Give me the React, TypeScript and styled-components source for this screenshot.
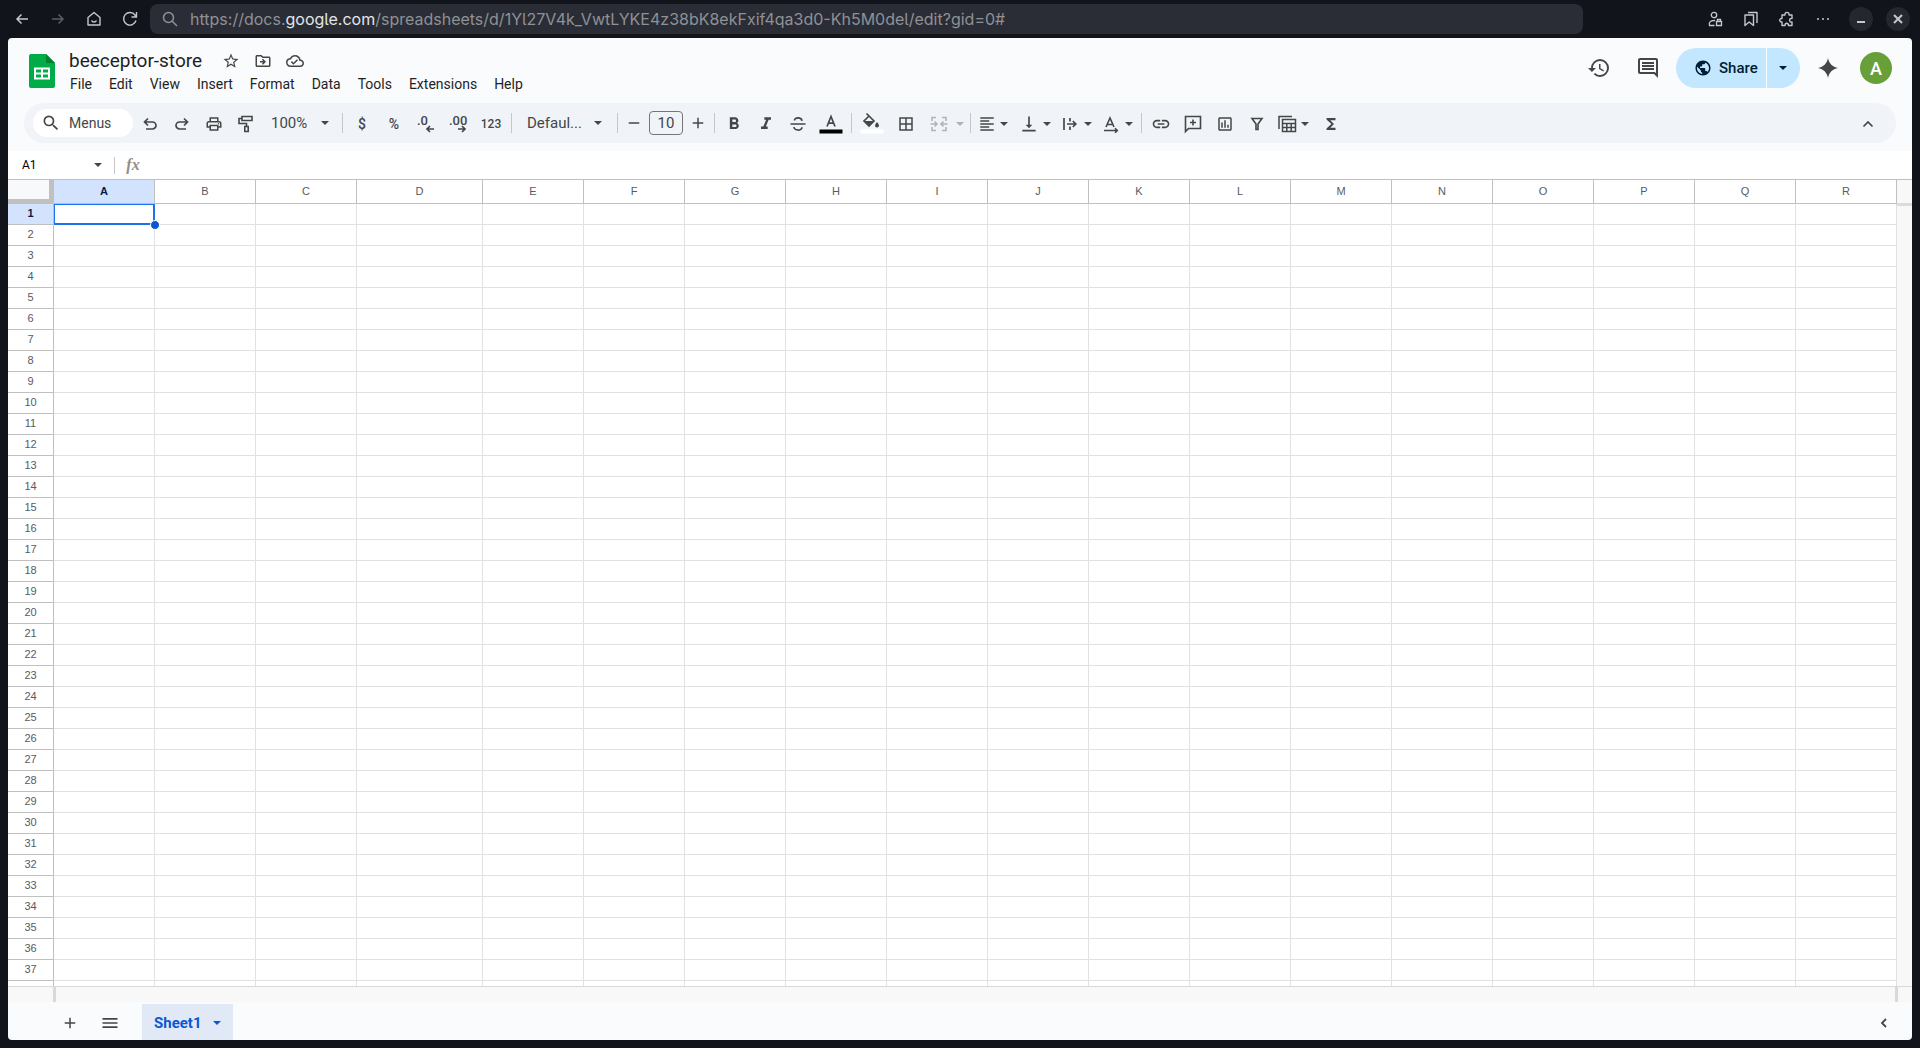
import React from "react";
import styled, { createGlobalStyle, css } from "styled-components";
import {
  MdAdd, MdBorderAll, MdFormatAlignLeft, MdFormatBold, MdFormatItalic, MdFunctions,
  MdHistory, MdLink, MdMenu, MdOutlineCloudDone, MdOutlineDriveFileMove, MdOutlineInsertChart,
  MdOutlineInsertComment, MdOutlinePrint, MdPublic, MdRemove, MdSearch, MdStarBorder,
  MdVerticalAlignBottom,
} from "react-icons/md";

const ui = `Roboto, "Open Sans", "Liberation Sans", sans-serif`;
const ink = "#444746";

const GlobalStyle = createGlobalStyle`
  *, *::before, *::after { box-sizing: border-box; }
  body { margin: 0; background: #11141b; font-family: ${ui}; }
  button, input, select { font-family: inherit; color: inherit; margin: 0; padding: 0; border: 0; background: none; }
  button { cursor: pointer; }
  svg { display: block; flex: none; }
`;

const Shell = styled.div`
  display: flex;
  flex-direction: column;
  height: 100vh;
  overflow: hidden;
`;

/* browser chrome */
const Chrome = styled.header`
  display: flex;
  align-items: center;
  height: 38px;
  padding: 0 10px 0 4px;
  color: #c6c7ca;
  flex: none;
`;
const ChromeButton = styled.button<{ $dim?: boolean }>`
  display: grid;
  place-items: center;
  width: 36px;
  height: 30px;
  color: ${(p) => (p.$dim ? "#5a5d63" : "inherit")};
`;
const Address = styled.div`
  display: flex;
  align-items: center;
  gap: 12px;
  flex: 1;
  min-width: 0;
  height: 30px;
  margin: 0 114px 0 2px;
  padding: 0 12px;
  border-radius: 8px;
  background: #2a2d35;
  color: #8f9196;
`;
const Url = styled.div`
  font: 400 16px/24px Inter, "Noto Sans", sans-serif;
  font-feature-settings: "cv05";
  white-space: nowrap;
  overflow: hidden;
  strong { font-weight: 400; color: #e4e5e7; }
`;
const WindowControls = styled.div`
  display: flex;
  gap: 13px;
  margin-left: 8px;
`;
const WindowButton = styled.button`
  display: grid;
  place-items: center;
  width: 24px;
  height: 24px;
  border-radius: 50%;
  background: #24272e;
`;

/* document */
const Page = styled.main`
  display: flex;
  flex-direction: column;
  flex: 1;
  min-height: 0;
  margin: 0 8px 8px;
  border-radius: 4px;
  overflow: hidden;
  background: #f9fbfd;
  color: ${ink};
`;
const DocHeader = styled.div`
  display: flex;
  align-items: flex-start;
  height: 65px;
  padding: 0 20px 0 21px;
  flex: none;
`;
const LogoLink = styled.a`
  display: block;
  padding-top: 16px;
`;
const TitleBlock = styled.div`
  flex: 1;
  padding: 11px 0 0 7px;
`;
const TitleRow = styled.div`
  display: flex;
  align-items: center;
  height: 24px;
`;
const TitleInput = styled.input`
  width: 153px;
  height: 24px;
  padding: 0 7px;
  font-size: 19px;
  line-height: 24px;
  color: #1f1f1f;
`;
const TitleButton = styled.button`
  display: grid;
  place-items: center;
  width: 32px;
  height: 24px;
`;
const MenuBar = styled.nav`
  display: flex;
  gap: 1px;
  height: 22px;
`;
const MenuButton = styled.button`
  padding: 0 8px;
  font-size: 14px;
  line-height: 22px;
  color: #1f1f1f;
`;
const HeaderActions = styled.div`
  display: flex;
  align-items: center;
  height: 40px;
  margin-top: 10px;
`;
const HeaderButton = styled.button<{ $width: number }>`
  display: grid;
  place-items: center;
  width: ${(p) => p.$width}px;
  height: 40px;
`;
const ShareGroup = styled.div`
  display: flex;
  gap: 1px;
  height: 40px;
  margin-left: 4px;
  border-radius: 20px;
  overflow: hidden;
  color: #001d35;
`;
const ShareButton = styled.button`
  display: flex;
  align-items: center;
  gap: 7px;
  width: 90px;
  padding-left: 18px;
  background: #c2e7ff;
  font-size: 15px;
  font-weight: 500;
`;
const ShareMenu = styled.button`
  display: grid;
  place-items: center;
  width: 33px;
  padding-right: 2px;
  background: #c2e7ff;
`;
const Avatar = styled.button`
  width: 32px;
  height: 32px;
  margin-left: 4px;
  border-radius: 50%;
  background: #689f38;
  color: #fff;
  font-size: 18px;
  font-weight: 500;
`;

/* toolbar */
const Toolbar = styled.div`
  display: flex;
  align-items: center;
  height: 40px;
  margin: 0 16px 8px;
  padding: 0 12px 0 9px;
  border-radius: 20px;
  background: #f0f4f9;
  flex: none;
`;
const MenuSearch = styled.label`
  display: flex;
  align-items: center;
  gap: 8px;
  width: 100px;
  height: 28px;
  margin-right: 1px;
  padding-left: 8px;
  border-radius: 14px;
  background: #fff;
  input { width: 56px; font-size: 14px; outline: 0; }
  input::placeholder { color: ${ink}; opacity: 1; }
`;
const Tool = styled.button<{ $width?: number; $small?: boolean }>`
  display: grid;
  place-items: center;
  width: ${(p) => p.$width ?? 32}px;
  height: 28px;
  padding-top: 2px;
  font-size: ${(p) => (p.$small ? 12 : 14)}px;
  font-weight: 500;
  flex: none;
`;
const StepTool = styled(Tool)`
  width: 26px;
  padding-top: 0;
`;
const DropTool = styled.button<{ $wide?: boolean }>`
  display: flex;
  align-items: center;
  width: ${(p) => (p.$wide ? 44 : 41)}px;
  height: 28px;
  padding-top: 2px;
  padding-left: ${(p) => (p.$wide ? 6 : 4)}px;
  gap: ${(p) => (p.$wide ? 3 : 0)}px;
  flex: none;
  &:disabled { color: #b0b4b7; }
`;
const Rule = styled.span`
  width: 1px;
  height: 20px;
  margin: 0 3px;
  background: #c7c7c7;
  flex: none;
`;
const SelectBox = styled.div<{ $width: number; $pad: number; $end: number }>`
  display: grid;
  align-items: center;
  width: ${(p) => p.$width}px;
  height: 28px;
  flex: none;
  > * { grid-area: 1 / 1; }
  select {
    width: 100%;
    height: 28px;
    padding-left: ${(p) => p.$pad}px;
    appearance: none;
    font-size: 15px;
  }
  svg { justify-self: end; margin-right: ${(p) => p.$end}px; pointer-events: none; }
`;
const SizeInput = styled.input`
  width: 34px;
  height: 24px;
  margin: 0 2px;
  border: 1px solid #747775;
  border-radius: 4px;
  font-size: 15px;
  text-align: center;
`;
const Spacer = styled.span`
  flex: 1;
`;

/* formula bar */
const FormulaBar = styled.div`
  display: flex;
  align-items: center;
  height: 28px;
  background: #fff;
  flex: none;
`;
const NameBox = styled.input`
  width: 82px;
  height: 28px;
  padding-left: 14px;
  font-size: 12px;
  color: #000;
`;
const FormulaRule = styled.span`
  width: 1px;
  height: 17px;
  margin-left: 8px;
  background: #c7c7c7;
`;
const FormulaLabel = styled.label`
  display: grid;
  place-items: center;
  width: 36px;
  height: 28px;
  font: italic 700 16px/28px "Liberation Serif", serif;
  color: #8f8f8f;
`;
const FormulaInput = styled.input`
  flex: 1;
  height: 28px;
  font-size: 13px;
  outline: 0;
`;
const NameArrow = styled.button`
  width: 16px;
  height: 16px;
`;

/* grid */
const GridArea = styled.div`
  display: flex;
  flex: 1;
  min-height: 0;
  border-top: 1px solid #c0c0c0;
  background: #fff;
`;
const GridViewport = styled.div`
  flex: 1;
  min-width: 0;
  overflow: hidden;
`;
const GridTable = styled.table`
  table-layout: fixed;
  width: 0;
  border-collapse: separate;
  border-spacing: 0;
  font: 400 11px/18px "Liberation Sans", Arial, sans-serif;
  color: #575b5f;
  td { padding: 0; }
  th { padding: 0 0 2px; }
`;
const headActive = css`
  background: #d3e3fd;
  color: #041e49;
  font-weight: 700;
`;
const Corner = styled.th`
  height: 24px;
  border-right: 5px solid #c0c0c0;
  border-bottom: 5px solid #c0c0c0;
  background: #f8f9fa;
`;
const ColHead = styled.th<{ $active: boolean }>`
  height: 24px;
  border-right: 1px solid #c0c0c0;
  border-bottom: 1px solid #c0c0c0;
  font-weight: 400;
  ${(p) => p.$active && headActive}
`;
const RowHead = styled.th<{ $active: boolean }>`
  height: 21px;
  border-right: 1px solid #c0c0c0;
  border-bottom: 1px solid #c0c0c0;
  font-weight: 400;
  ${(p) => p.$active && headActive}
`;
const Cell = styled.td<{ $selected: boolean }>`
  position: relative;
  height: 21px;
  border-right: 1px solid #e1e1e1;
  border-bottom: 1px solid #e1e1e1;
  ${(p) =>
    p.$selected &&
    css`
      &::before {
        content: "";
        position: absolute;
        inset: 0 -1px -1px 0;
        border: 2px solid #1a73e8;
        border-width: 1px 2px 2px 1px;
      }
      &::after {
        content: "";
        position: absolute;
        right: -6px;
        bottom: -6px;
        z-index: 1;
        width: 10px;
        height: 10px;
        border: 1px solid #fff;
        border-radius: 50%;
        background: #0b57d0;
      }
    `}
`;
const VerticalTrack = styled.div`
  width: 15px;
  background: #f8f8f8;
  &::before {
    content: "";
    display: block;
    height: 26px;
    border-bottom: 3px solid #dadce0;
  }
`;
const HorizontalTrack = styled.div`
  display: flex;
  justify-content: space-between;
  height: 16px;
  padding: 0 14px 0 45px;
  border-top: 1px solid #d9d9d9;
  background: #f8f8f8;
  flex: none;
  &::before, &::after { content: ""; width: 3px; background: #d9d9d9; }
`;

/* sheet tabs */
const SheetBar = styled.footer`
  display: flex;
  align-items: center;
  height: 38px;
  padding: 2px 8px 0 42px;
  flex: none;
`;
const BarButton = styled.button`
  display: grid;
  place-items: center;
  width: 40px;
  height: 36px;
  padding-top: 2px;
`;
const SheetTab = styled.button`
  display: flex;
  align-items: center;
  justify-content: space-between;
  width: 91px;
  height: 36px;
  margin-left: 12px;
  padding: 2px 8px 0 12px;
  background: #e1e9f7;
  color: #0b57d0;
  font-size: 15px;
  font-weight: 700;
`;

type GlyphProps = { size?: number; box?: number; width?: number; children: React.ReactNode };
const Glyph = ({ size = 20, box = 20, width = 2, children }: GlyphProps) => (
  <svg width={size} height={size} viewBox={`0 0 ${box} ${box}`} fill="none" stroke="currentColor" strokeWidth={width} aria-hidden="true">
    {children}
  </svg>
);

const Caret = () => (
  <svg width="16" height="16" viewBox="0 0 16 16" fill="currentColor" aria-hidden="true">
    <path d="M4 6h8l-4 4z" />
  </svg>
);

const SheetsLogo = () => (
  <svg width="26" height="34" viewBox="0 0 26 34" aria-hidden="true">
    <path d="M2 0h15l9 9v23a2 2 0 0 1-2 2H2a2 2 0 0 1-2-2V2a2 2 0 0 1 2-2z" fill="#00ac47" />
    <path d="M17 0l9 9h-9z" fill="#00832d" />
    <path d="M5 13.500v12h16v-12zm2 2h5v3H7zm7 0h5v3h-5zm-7 5h5v3H7zm7 0h5v3h-5z" fill="#fff" fillRule="evenodd" />
  </svg>
);

const Undo = () => (
  <Glyph width={1.7}><path d="M8 4.500L4.500 8 8 11.500M5 8h7.500a3.500 3.500 0 0 1 0 7H6" /></Glyph>
);
const Redo = () => (
  <Glyph width={1.7}><path d="M12 4.500L15.500 8 12 11.500M15 8H7.500a3.500 3.500 0 0 0 0 7H14" /></Glyph>
);
const Roller = () => (
  <Glyph width={1.6}><path d="M6 2.500h10v4H6zM6 4.500H3v5h7.500v3M8.800 12.500h3.400v5H8.800z" /></Glyph>
);
const Decimal = ({ digits, right }: { digits: string; right?: boolean }) => (
  <svg width="24" height="24" viewBox="0 0 24 24" aria-hidden="true">
    <text x={3} y="13" fill="currentColor" fontSize="13" fontWeight="500">{digits}</text>
    <path d={right ? "M12 17h7M16 14l3 3-3 3" : "M13 17h7M16 14l-3 3 3 3"} fill="none" stroke="currentColor" strokeWidth="1.700" />
  </svg>
);
const Strike = () => (
  <Glyph width={1.7}><path d="M2.500 10h15M14 6.800C13.500 3 6.500 3 6.500 6.500M6 13c.5 4 8 4 8 .2" /></Glyph>
);
const TextColor = () => (
  <svg width="24" height="24" viewBox="0 0 24 24" aria-hidden="true">
    <path d="M8 14.500L12 4.500l4 10M9.300 11.200h5.400" fill="none" stroke="currentColor" strokeWidth="1.700" />
    <path d="M.5 17.500h23v4H.5z" fill="#000" />
  </svg>
);
const FillColor = () => (
  <svg width="24" height="24" viewBox="0 0 24 24" aria-hidden="true">
    <path d="M6.500 1.500l7.500 7.500-5 5-5-5 5-5" fill="none" stroke="currentColor" strokeWidth="1.700" />
    <path d="M4.500 9h9L9 13.500zM17 10s2 2.300 2 3.500a2 2 0 0 1-4 0c0-1.200 2-3.500 2-3.500z" fill="currentColor" />
    <path d="M.5 17.500h23v4H.5z" fill="#fff" />
  </svg>
);
const Merge = () => (
  <Glyph width={1.6}><path d="M7 3.500H3v3.500M3 13v3.500h4M13 3.500h4V7M17 13v3.500h-4M1.500 10h6M5.500 7.500L8 10l-2.500 2.500M18.500 10h-6M14.500 7.500L12 10l2.500 2.500" /></Glyph>
);
const Wrap = () => (
  <Glyph width={1.7}><path d="M4 4v12M10 4v3.500M10 12.500V16M7 10h8.500M12.800 7l3 3-3 3" /></Glyph>
);
const Rotate = () => (
  <Glyph width={1.6}><path d="M5 13L9 4l4 9M6.500 10.500h5M3 16.500h13M14 14.200l2.300 2.300-2.300 2.300" /></Glyph>
);
const CommentAdd = () => (
  <Glyph width={1.6}><path d="M2.500 17.500v-15h15v12H5.500zM10 5.500v6M7 8.500h6" /></Glyph>
);
const TableViews = () => (
  <Glyph width={1.5}><path d="M2 15V2.500h13M5.500 5.500h13v12h-13zM5.500 9.500h13M5.500 13.500h13M9.800 9.500v8M14.200 9.500v8" /></Glyph>
);
const Spark = () => (
  <svg width="22" height="22" viewBox="0 0 22 22" fill="currentColor" aria-hidden="true">
    <path d="M11 1c1 5.500 4.500 9 10 10-5.500 1-9 4.500-10 10-1-5.500-4.500-9-10-10 5.500-1 9-4.500 10-10z" />
  </svg>
);

const columns = "ABCDEFGHIJKLMNOPQR".split("");
const rows = Array.from({ length: 37 }, (_, i) => i + 1);
const menus = ["File", "Edit", "View", "Insert", "Format", "Data", "Tools", "Extensions", "Help"];

const BrowserBar = () => (
  <Chrome>
    <ChromeButton aria-label="Back"><Glyph size={16} box={16} width={1.5}><path d="M14 8H3M7.500 3.500L3 8l4.500 4.500" /></Glyph></ChromeButton>
    <ChromeButton aria-label="Forward" $dim><Glyph size={16} box={16} width={1.5}><path d="M2 8h11M8.500 3.500L13 8l-4.500 4.500" /></Glyph></ChromeButton>
    <ChromeButton aria-label="Home"><Glyph size={16} box={16} width={1.4}><path d="M2 6.500L8 1.500l6 5V14H2zM5.500 9.500c1 2 4 2 5 0" strokeLinejoin="round" /></Glyph></ChromeButton>
    <ChromeButton aria-label="Reload"><Glyph size={16} box={16} width={1.4}><path d="M14 9.500A6.300 6.300 0 1 1 13 4l1 1.500M14.500 1v5h-5" /></Glyph></ChromeButton>
    <Address>
      <Glyph size={16} box={16} width={1.5}><circle cx="6.500" cy="6.500" r="5" /><path d="M10 10l5 5" /></Glyph>
      <Url role="textbox" aria-label="Address" contentEditable suppressContentEditableWarning spellCheck={false}>
        https://docs.<strong>google.com</strong>/spreadsheets/d/1Yl27V4k_VwtLYKE4z38bK8ekFxif4qa3d0-Kh5M0del/edit?gid=0#
      </Url>
    </Address>
    <ChromeButton aria-label="Account"><Glyph size={16} box={16} width={1.3}><circle cx="7" cy="4" r="2.700" /><path d="M7.500 14.500H2.500c-1-3 1-5 4.500-5h1M9.500 10.500h5v4h-5zM10.500 10.500V8.500h3v2" /></Glyph></ChromeButton>
    <ChromeButton aria-label="Bookmarks"><Glyph size={16} box={16} width={1.4}><path d="M2 4h8.500v10.500L6.200 11 2 14.500zM5 1.500h9V12" strokeLinejoin="round" /></Glyph></ChromeButton>
    <ChromeButton aria-label="Extensions"><Glyph size={16} box={16} width={1.4}><path d="M3 4h3c-.8-3.500 4.800-3.500 4 0h3v3.500c-3.200-.8-3.200 4.300 0 3.500V14.500H9.500c0-3-3.500-3-3.500 0H3V11C0 11.500 0 7 3 7.500z" strokeLinejoin="round" /></Glyph></ChromeButton>
    <ChromeButton aria-label="More"><svg width="14" height="4" viewBox="0 0 14 4" fill="currentColor"><circle cx="2" cy="2" r="1" /><circle cx="7" cy="2" r="1" /><circle cx="12" cy="2" r="1" /></svg></ChromeButton>
    <WindowControls>
      <WindowButton aria-label="Minimize"><Glyph size={16} box={16}><path d="M4 11h8" /></Glyph></WindowButton>
      <WindowButton aria-label="Close"><Glyph size={16} box={16}><path d="M4 4l8 8M12 4l-8 8" /></Glyph></WindowButton>
    </WindowControls>
  </Chrome>
);

const Header = () => (
  <DocHeader>
    <LogoLink href="#" aria-label="Sheets home"><SheetsLogo /></LogoLink>
    <TitleBlock>
      <TitleRow>
        <TitleInput aria-label="Rename" defaultValue="beeceptor-store" />
        <TitleButton aria-label="Star"><MdStarBorder size={18} /></TitleButton>
        <TitleButton aria-label="Move"><MdOutlineDriveFileMove size={18} /></TitleButton>
        <TitleButton aria-label="Document status"><MdOutlineCloudDone size={18} /></TitleButton>
      </TitleRow>
      <MenuBar>{menus.map((m) => <MenuButton key={m}>{m}</MenuButton>)}</MenuBar>
    </TitleBlock>
    <HeaderActions>
      <HeaderButton $width={50} aria-label="Version history"><MdHistory size={24} /></HeaderButton>
      <HeaderButton $width={48} aria-label="Comments"><MdOutlineInsertComment size={24} /></HeaderButton>
      <ShareGroup>
        <ShareButton><MdPublic size={18} />Share</ShareButton>
        <ShareMenu aria-label="Share options"><Caret /></ShareMenu>
      </ShareGroup>
      <HeaderButton $width={56} aria-label="Ask Gemini"><Spark /></HeaderButton>
      <Avatar>A</Avatar>
    </HeaderActions>
  </DocHeader>
);

const Tools = () => (
  <Toolbar role="toolbar" aria-label="Main">
    <MenuSearch><MdSearch size={20} /><input placeholder="Menus" aria-label="Menus" /></MenuSearch>
    <Tool aria-label="Undo"><Undo /></Tool>
    <Tool aria-label="Redo"><Redo /></Tool>
    <Tool aria-label="Print"><MdOutlinePrint size={18} /></Tool>
    <Tool aria-label="Paint format"><Roller /></Tool>
    <SelectBox $width={77} $pad={9} $end={6}><select aria-label="Zoom"><option>100%</option></select><Caret /></SelectBox>
    <Rule />
    <Tool aria-label="Format as currency">$</Tool>
    <Tool aria-label="Format as percent">%</Tool>
    <Tool aria-label="Decrease decimal places"><Decimal digits=".0" /></Tool>
    <Tool aria-label="Increase decimal places"><Decimal digits=".00" right /></Tool>
    <Tool $small $width={34} aria-label="More formats">123</Tool>
    <Rule />
    <SelectBox $width={99} $pad={12} $end={8}><select aria-label="Font"><option>Defaul...</option></select><Caret /></SelectBox>
    <Rule />
    <StepTool aria-label="Decrease font size"><MdRemove size={18} /></StepTool>
    <SizeInput aria-label="Font size" defaultValue="10" />
    <StepTool aria-label="Increase font size"><MdAdd size={18} /></StepTool>
    <Rule />
    <Tool aria-label="Bold"><MdFormatBold size={20} /></Tool>
    <Tool aria-label="Italic"><MdFormatItalic size={20} /></Tool>
    <Tool aria-label="Strikethrough"><Strike /></Tool>
    <Tool $width={34} aria-label="Text color"><TextColor /></Tool>
    <Rule />
    <Tool $width={34} aria-label="Fill color"><FillColor /></Tool>
    <Tool $width={34} aria-label="Borders"><MdBorderAll size={18} /></Tool>
    <DropTool $wide disabled aria-label="Merge cells"><Merge /><Caret /></DropTool>
    <Rule />
    <DropTool aria-label="Horizontal align"><MdFormatAlignLeft size={18} /><Caret /></DropTool>
    <DropTool aria-label="Vertical align"><MdVerticalAlignBottom size={20} /><Caret /></DropTool>
    <DropTool aria-label="Text wrapping"><Wrap /><Caret /></DropTool>
    <DropTool aria-label="Text rotation"><Rotate /><Caret /></DropTool>
    <Rule />
    <Tool aria-label="Insert link"><MdLink size={20} /></Tool>
    <Tool aria-label="Insert comment"><CommentAdd /></Tool>
    <Tool aria-label="Insert chart"><MdOutlineInsertChart size={18} /></Tool>
    <Tool aria-label="Create a filter"><Glyph width={1.6}><path d="M5 4.500h10l-4 5.500v5.500H9V10z" /></Glyph></Tool>
    <DropTool aria-label="Table views"><TableViews /><Caret /></DropTool>
    <Tool $width={34} aria-label="Functions"><MdFunctions size={18} /></Tool>
    <Spacer />
    <Tool aria-label="Hide the menus"><Glyph width={1.7}><path d="M5.500 12.500L10 8l4.500 4.500" /></Glyph></Tool>
  </Toolbar>
);

const Grid = () => (
  <GridArea>
    <GridViewport>
      <GridTable>
        <colgroup>
          <col style={{ width: 46 }} />
          {columns.map((c) => <col key={c} style={{ width: c === "D" ? 126 : 101 }} />)}
        </colgroup>
        <thead>
          <tr>
            <Corner aria-label="Select all" />
            {columns.map((c) => <ColHead key={c} scope="col" $active={c === "A"}>{c}</ColHead>)}
          </tr>
        </thead>
        <tbody>
          {rows.map((r) => (
            <tr key={r}>
              <RowHead scope="row" $active={r === 1}>{r}</RowHead>
              {columns.map((c) => <Cell key={c} $selected={r === 1 && c === "A"} />)}
            </tr>
          ))}
          <tr>
            <RowHead $active={false} />
            {columns.map((c) => <Cell key={c} $selected={false} />)}
          </tr>
        </tbody>
      </GridTable>
    </GridViewport>
    <VerticalTrack />
  </GridArea>
);

export default function App() {
  return (
    <>
      <GlobalStyle />
      <Shell>
        <BrowserBar />
        <Page>
          <Header />
          <Tools />
          <FormulaBar>
            <NameBox aria-label="Name box" defaultValue="A1" />
            <NameArrow aria-label="Named ranges"><Caret /></NameArrow>
            <FormulaRule />
            <FormulaLabel htmlFor="formula">fx</FormulaLabel>
            <FormulaInput id="formula" />
          </FormulaBar>
          <Grid />
          <HorizontalTrack />
          <SheetBar>
            <BarButton aria-label="Add sheet"><MdAdd size={18} /></BarButton>
            <BarButton aria-label="All sheets"><MdMenu size={20} /></BarButton>
            <SheetTab>Sheet1<Caret /></SheetTab>
            <Spacer />
            <BarButton aria-label="Show side panel"><Glyph width={1.8}><path d="M12 6l-4 4 4 4" /></Glyph></BarButton>
          </SheetBar>
        </Page>
      </Shell>
    </>
  );
}
